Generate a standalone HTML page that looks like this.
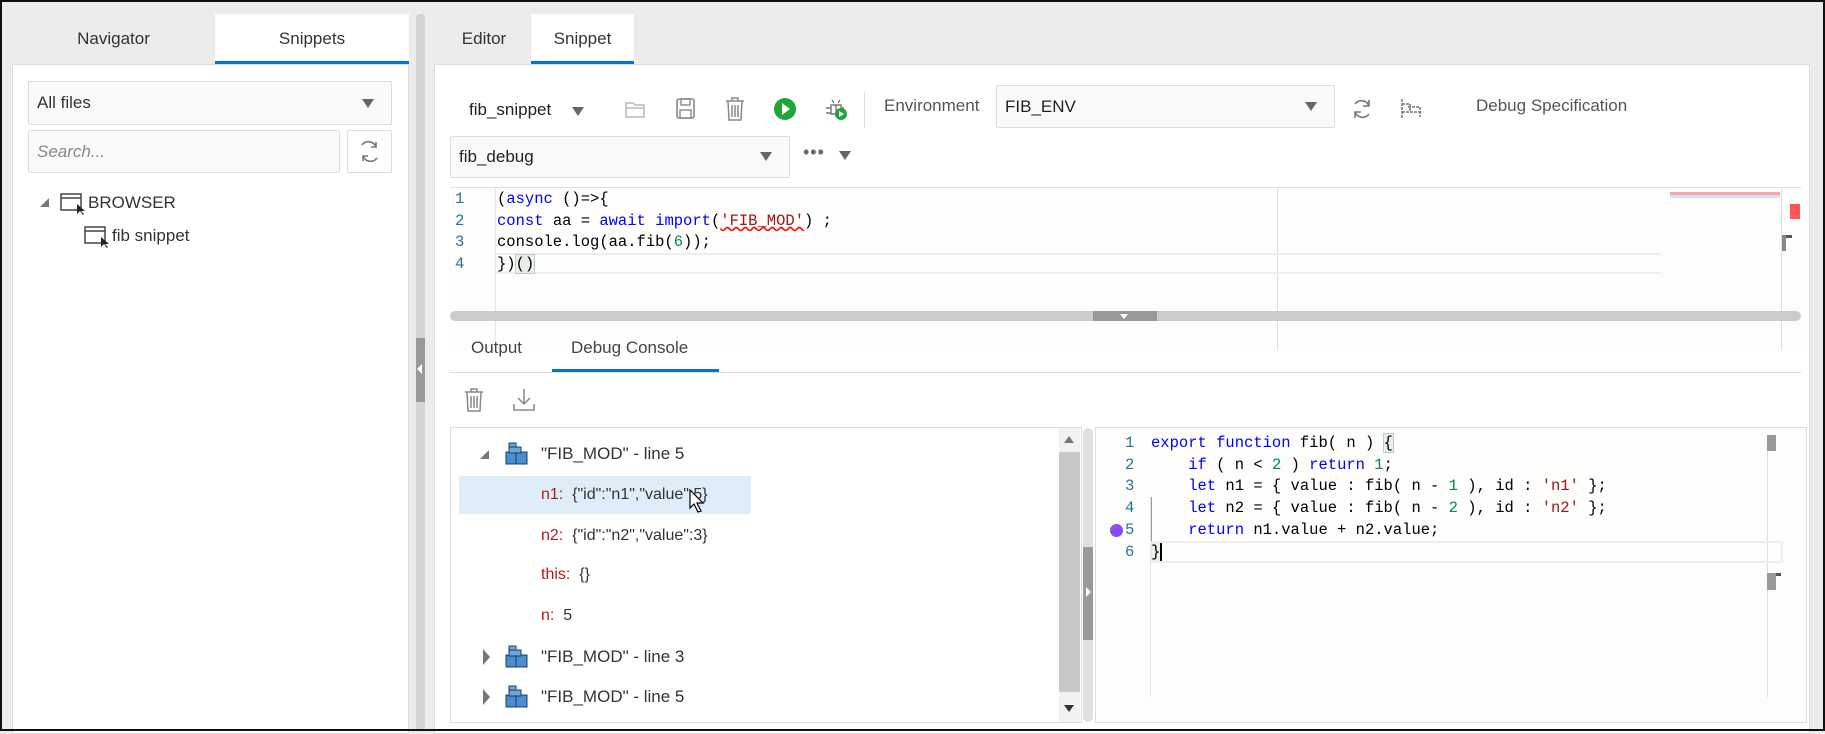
<!DOCTYPE html>
<html><head><meta charset="utf-8"><style>
*{margin:0;padding:0;box-sizing:border-box}
body{width:1825px;height:731px;overflow:hidden;background:#edecea;font-family:"Liberation Sans",sans-serif;color:#333;position:relative;font-size:17px}
.a{position:absolute}
.frame{position:absolute;left:0;top:0;width:1825px;height:731px;border:2px solid #111;pointer-events:none}
.tab{position:absolute;top:14px;height:50px;line-height:50px;text-align:center;font-size:17px;color:#333}
.sel{background:#fff;border-bottom:3px solid #0572ce}
.panel{position:absolute;background:#fff;border:1px solid #ddd}
.inp{position:absolute;background:#fafafa;border:1px solid #ddd;border-radius:2px;font-size:17px;padding-left:8px}
.caret{position:absolute;width:0;height:0;border-left:6px solid transparent;border-right:6px solid transparent;border-top:9px solid #666}
.mono{font-family:"Liberation Mono",monospace;font-size:15.5px;white-space:pre}
.kw{color:#0000ff}.st{color:#a31515}.nu{color:#098658}
.lab{color:#b01c1c}
</style></head><body>
<div class="tab" style="left:12px;width:203px">Navigator</div>
<div class="tab sel" style="left:215px;width:194px">Snippets</div>
<div class="panel" style="left:12px;top:64px;width:397px;height:670px"></div>
<div class="inp" style="left:28px;top:81px;width:364px;height:44px;line-height:42px">All files</div>
<div class="caret" style="left:362px;top:99px"></div>
<div class="inp" style="left:28px;top:130px;width:312px;height:43px;line-height:41px;color:#888;font-style:italic">Search...</div>
<div class="inp" style="left:347px;top:130px;width:45px;height:43px;background:#fff;padding:0"><svg width="43" height="41" viewBox="0 0 43 41"><path d="M28 16a8 8 0 0 0-14-2M15 25a8 8 0 0 0 14 2" fill="none" stroke="#777" stroke-width="1.6"/><path d="M28 11v5h-5M15 30v-5h5" fill="none" stroke="#777" stroke-width="1.6"/></svg></div>
<div class="a" style="left:40px;top:198px;width:0;height:0;border-left:9px solid transparent;border-bottom:9px solid #777"></div>
<svg class="a" style="left:60px;top:192px" width="26" height="24"><rect x="1" y="2" width="20" height="16" fill="none" stroke="#444" stroke-width="1.5"/><line x1="1" y1="6" x2="21" y2="6" stroke="#444" stroke-width="1.5"/><path d="M17 12l0 10 3-3 3 4 1-1-3-3 4 0z" fill="#222"/></svg>
<div class="a" style="left:88px;top:193px;font-size:17px">BROWSER</div>
<svg class="a" style="left:84px;top:225px" width="26" height="24"><rect x="1" y="2" width="20" height="16" fill="none" stroke="#444" stroke-width="1.5"/><line x1="1" y1="6" x2="21" y2="6" stroke="#444" stroke-width="1.5"/><path d="M17 12l0 10 3-3 3 4 1-1-3-3 4 0z" fill="#222"/></svg>
<div class="a" style="left:112px;top:226px;font-size:17px">fib snippet</div>
<div class="a" style="left:416px;top:14px;width:9px;height:717px;background:#d4d4d4;border-radius:4px"></div>
<div class="a" style="left:416px;top:338px;width:9px;height:64px;background:#999"></div>
<div class="a" style="left:417px;top:364px;width:0;height:0;border-top:5px solid transparent;border-bottom:5px solid transparent;border-right:5px solid #fff"></div>
<div class="tab" style="left:440px;width:88px">Editor</div>
<div class="tab sel" style="left:531px;width:103px">Snippet</div>
<div class="panel" style="left:434px;top:64px;width:1376px;height:670px"></div>
<div class="a" style="left:469px;top:100px;font-size:17px;color:#222">fib_snippet</div>
<div class="caret" style="left:572px;top:107px"></div>
<svg class="a" style="left:624px;top:98px" width="24" height="22"><path d="M2 5h7l2 2h9v12H2z" fill="none" stroke="#bbb" stroke-width="1.6"/><line x1="2" y1="10" x2="20" y2="10" stroke="#bbb" stroke-width="1.6"/></svg>
<svg class="a" style="left:675px;top:97px" width="22" height="24"><rect x="2" y="2" width="17" height="19" rx="2" fill="none" stroke="#888" stroke-width="1.6"/><rect x="6" y="2" width="9" height="6" fill="none" stroke="#888" stroke-width="1.4"/><rect x="5" y="13" width="11" height="8" fill="none" stroke="#888" stroke-width="1.4"/></svg>
<svg class="a" style="left:724px;top:96px" width="22" height="26"><path d="M2 5h18M8 5V2h6v3M4 5l1 19h12l1-19M8 9v12M11 9v12M14 9v12" fill="none" stroke="#888" stroke-width="1.5"/></svg>
<svg class="a" style="left:773px;top:97px" width="24" height="24"><circle cx="12" cy="12" r="11" fill="#1fa538"/><path d="M9 6l8 6-8 6z" fill="#fff"/></svg>
<svg class="a" style="left:823px;top:96px" width="26" height="26"><path d="M9 4l2 3M17 4l-2 3M8 9h10v9H8zM3 12h5M3 17h5M18 12h3M13 9v9" fill="none" stroke="#777" stroke-width="1.4"/><circle cx="18" cy="18" r="6" fill="#1fa538"/><path d="M16 15l5 3-5 3z" fill="#fff"/></svg>
<div class="a" style="left:864px;top:92px;width:1px;height:36px;background:#ddd"></div>
<div class="a" style="left:884px;top:96px;font-size:17px;color:#555">Environment</div>
<div class="inp" style="left:996px;top:85px;width:339px;height:43px;line-height:41px;color:#222">FIB_ENV</div>
<div class="caret" style="left:1305px;top:102px"></div>
<svg class="a" style="left:1349px;top:96px" width="26" height="26"><path d="M20 10a8 8 0 0 0-14-2M6 16a8 8 0 0 0 14 2" fill="none" stroke="#777" stroke-width="1.6"/><path d="M20 4v6h-6M6 22v-6h6" fill="none" stroke="#777" stroke-width="1.6"/></svg>
<svg class="a" style="left:1399px;top:96px" width="26" height="26"><path d="M3 3v19M3 8h8v8M3 16h19M9 11h12v10" fill="none" stroke="#777" stroke-width="1.5" stroke-dasharray="3 1"/></svg>
<div class="a" style="left:1476px;top:96px;font-size:17px;color:#555">Debug Specification</div>
<div class="inp" style="left:450px;top:136px;width:340px;height:42px;line-height:40px;color:#222">fib_debug</div>
<div class="caret" style="left:760px;top:152px"></div>
<div class="a" style="left:803px;top:142px;font-size:18px;color:#666;letter-spacing:1px">•••</div>
<div class="caret" style="left:839px;top:151px"></div>
<div class="a" style="left:450px;top:187px;width:1351px;height:1px;background:#ddd"></div>
<div class="a" style="left:450px;top:188px;width:1351px;height:162px;background:#fdfdfc"></div>
<div class="a" style="left:495px;top:188px;width:1px;height:162px;background:#e6e6e6"></div>
<div class="a" style="left:1277px;top:188px;width:1px;height:162px;background:#ddd"></div>
<div class="a" style="left:1781px;top:188px;width:1px;height:162px;background:#ddd"></div>
<div class="a" style="left:496px;top:253px;width:1165px;height:21px;border-top:2px solid #eee;border-bottom:2px solid #eee"></div>
<div class="a mono" style="left:455px;top:189px;line-height:21.7px;color:#237893">1
2
3
4</div>
<div class="a mono" style="left:497px;top:189px;line-height:21.7px;color:#000">(<span class="kw">async</span> ()=>{
<span class="kw">const</span> aa = <span class="kw">await</span> <span class="kw">import</span>(<span class="st" style="text-decoration:underline wavy red">'FIB_MOD'</span>) ;
console.log(aa.fib(<span class="nu">6</span>));
})<span style="background:#e8efe8;outline:1px solid #bcc">()</span></div>
<div class="a" style="left:1670px;top:192px;width:110px;height:3px;background:#f8a8a8"></div>
<div class="a" style="left:1670px;top:195px;width:110px;height:3px;background:#cfe3f3"></div>
<div class="a" style="left:1790px;top:204px;width:10px;height:15px;background:#f55"></div>
<div class="a" style="left:1782px;top:235px;width:10px;height:3px;background:#555"></div>
<div class="a" style="left:1782px;top:235px;width:4px;height:16px;background:#888"></div>
<div class="a" style="left:450px;top:311px;width:1351px;height:10px;background:#ccc;border-radius:5px"></div>
<div class="a" style="left:1093px;top:311px;width:64px;height:10px;background:#999"></div>
<div class="a" style="left:1120px;top:314px;width:0;height:0;border-left:4px solid transparent;border-right:4px solid transparent;border-top:5px solid #fff"></div>
<div class="a" style="left:471px;top:338px;font-size:17px;color:#444">Output</div>
<div class="a" style="left:571px;top:338px;font-size:17px;color:#444">Debug Console</div>
<div class="a" style="left:450px;top:372px;width:1351px;height:1px;background:#ddd"></div>
<div class="a" style="left:552px;top:369px;width:167px;height:3px;background:#0572ce"></div>
<svg class="a" style="left:463px;top:387px" width="22" height="26"><path d="M2 5h18M8 5V2h6v3M4 5l1 19h12l1-19M8 9v12M11 9v12M14 9v12" fill="none" stroke="#888" stroke-width="1.5"/></svg>
<svg class="a" style="left:512px;top:387px" width="24" height="26"><path d="M12 2v15M6 11l6 6 6-6M2 17v6h20v-6" fill="none" stroke="#888" stroke-width="1.5"/></svg>
<!-- debug tree -->
<div class="a" style="left:450px;top:427px;width:632px;height:296px;border:1px solid #ddd;background:#fff"></div>
<div class="a" style="left:1059px;top:428px;width:21px;height:294px;background:#f2f2f2"></div>
<div class="a" style="left:1059px;top:452px;width:21px;height:240px;background:#c8c8c8"></div>
<div class="a" style="left:1064px;top:436px;width:0;height:0;border-left:5px solid transparent;border-right:5px solid transparent;border-bottom:7px solid #777"></div>
<div class="a" style="left:1064px;top:705px;width:0;height:0;border-left:5px solid transparent;border-right:5px solid transparent;border-top:7px solid #333"></div>
<div class="a" style="left:459px;top:476px;width:292px;height:38px;background:#deedf8"></div>
<div class="a" style="left:480px;top:450px;width:0;height:0;border-left:9px solid transparent;border-bottom:9px solid #777"></div>
<div class="a" style="left:483px;top:649px;width:0;height:0;border-top:8px solid transparent;border-bottom:8px solid transparent;border-left:7px solid #777"></div>
<div class="a" style="left:483px;top:689px;width:0;height:0;border-top:8px solid transparent;border-bottom:8px solid transparent;border-left:7px solid #777"></div>
<svg class="a" style="left:505px;top:442px" width="24" height="24"><rect x="1" y="10" width="21" height="12" fill="#4a8ecf" stroke="#1c3f6b"/><rect x="4" y="5" width="12" height="6" fill="#6aa6dc" stroke="#1c3f6b"/><rect x="4" y="1" width="7" height="4" fill="#6aa6dc" stroke="#1c3f6b"/><line x1="11" y1="10" x2="11" y2="22" stroke="#1c3f6b"/></svg>
<svg class="a" style="left:505px;top:645px" width="24" height="24"><rect x="1" y="10" width="21" height="12" fill="#4a8ecf" stroke="#1c3f6b"/><rect x="4" y="5" width="12" height="6" fill="#6aa6dc" stroke="#1c3f6b"/><rect x="4" y="1" width="7" height="4" fill="#6aa6dc" stroke="#1c3f6b"/><line x1="11" y1="10" x2="11" y2="22" stroke="#1c3f6b"/></svg>
<svg class="a" style="left:505px;top:685px" width="24" height="24"><rect x="1" y="10" width="21" height="12" fill="#4a8ecf" stroke="#1c3f6b"/><rect x="4" y="5" width="12" height="6" fill="#6aa6dc" stroke="#1c3f6b"/><rect x="4" y="1" width="7" height="4" fill="#6aa6dc" stroke="#1c3f6b"/><line x1="11" y1="10" x2="11" y2="22" stroke="#1c3f6b"/></svg>
<div class="a" style="left:541px;top:444px;font-size:17px">"FIB_MOD" - line 5</div>
<div class="a" style="left:541px;top:486px;font-size:16px"><span class="lab">n1:</span>&nbsp;&nbsp;{"id":"n1","value":5}</div>
<div class="a" style="left:541px;top:527px;font-size:16px"><span class="lab">n2:</span>&nbsp;&nbsp;{"id":"n2","value":3}</div>
<div class="a" style="left:541px;top:566px;font-size:16px"><span class="lab">this:</span>&nbsp;&nbsp;{}</div>
<div class="a" style="left:541px;top:607px;font-size:16px"><span class="lab">n:</span>&nbsp;&nbsp;5</div>
<div class="a" style="left:541px;top:647px;font-size:17px">"FIB_MOD" - line 3</div>
<div class="a" style="left:541px;top:687px;font-size:17px">"FIB_MOD" - line 5</div>
<svg class="a" style="left:689px;top:489px" width="16" height="24"><path d="M1 1v18l4-4 4 8 3-1-4-8h6z" fill="#fff" stroke="#000" stroke-width="1.2"/></svg>
<div class="a" style="left:1083px;top:428px;width:10px;height:294px;background:#e0e0e0;border-radius:5px"></div>
<div class="a" style="left:1083px;top:547px;width:10px;height:93px;background:#999"></div>
<div class="a" style="left:1086px;top:587px;width:0;height:0;border-top:5px solid transparent;border-bottom:5px solid transparent;border-left:5px solid #fff"></div>
<div class="a" style="left:1095px;top:427px;width:712px;height:296px;border:1px solid #ddd;background:#fdfdfc"></div>
<div class="a" style="left:1150px;top:497px;width:1px;height:200px;background:#e6e6e6"></div>
<div class="a" style="left:1151px;top:497px;width:1px;height:45px;background:#999"></div>
<div class="a" style="left:1767px;top:435px;width:1px;height:262px;background:#ddd"></div>
<div class="a" style="left:1151px;top:541px;width:632px;height:22px;border:2px solid #eee"></div>
<div class="a" style="left:1767px;top:435px;width:9px;height:16px;background:#999"></div>
<div class="a" style="left:1767px;top:573px;width:14px;height:3px;background:#555"></div>
<div class="a" style="left:1767px;top:573px;width:9px;height:17px;background:#999"></div>
<div class="a" style="left:1110px;top:524px;width:13px;height:13px;border-radius:50%;background:#8a4cf5"></div>
<div class="a mono" style="left:1125px;top:433px;line-height:21.7px;color:#237893;text-align:right">1
2
3
4
5
6</div>
<div class="a mono" style="left:1151px;top:433px;line-height:21.7px;color:#000"><span class="kw">export</span> <span class="kw">function</span> fib( n ) <span style="background:#e8efe8;outline:1px solid #bcc">{</span>
    <span class="kw">if</span> ( n &lt; <span class="nu">2</span> ) <span class="kw">return</span> <span class="nu">1</span>;
    <span class="kw">let</span> n1 = { value : fib( n - <span class="nu">1</span> ), id : <span class="st">'n1'</span> };
    <span class="kw">let</span> n2 = { value : fib( n - <span class="nu">2</span> ), id : <span class="st">'n2'</span> };
    <span class="kw">return</span> n1.value + n2.value;
<span style="background:#e8efe8;border-right:2px solid #000">}</span></div>
<div class="frame"></div>
</body></html>
